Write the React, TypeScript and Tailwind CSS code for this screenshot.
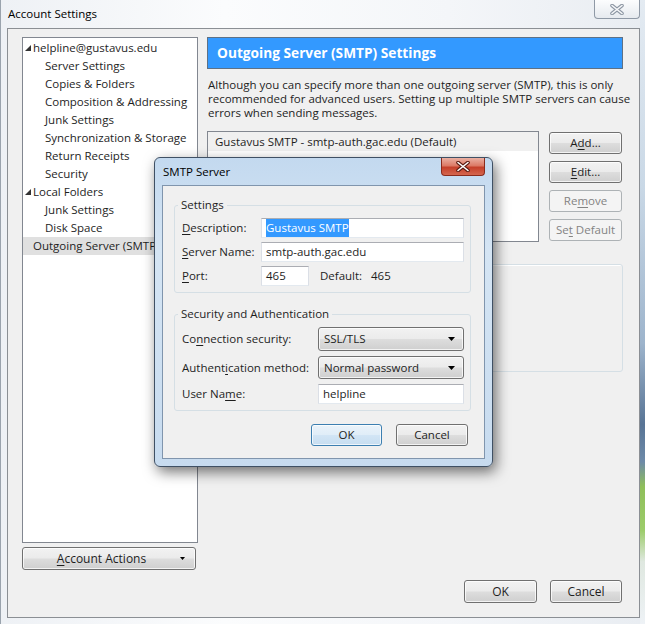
import React from "react";

// Windows 7 style classes
const btn =
  "flex items-center justify-center rounded-[3px] border border-[#707070] bg-[linear-gradient(to_bottom,#f2f2f2_0%,#ebebeb_48%,#dddddd_52%,#cfcfcf_100%)] shadow-[inset_0_0_0_1px_rgba(255,255,255,0.75)] text-[#1e1e1e]";
const btnOff =
  "flex items-center justify-center rounded-[3px] border border-[#adb2b5] bg-[#f4f4f4] text-[#838383]";
const textbox =
  "flex items-center border border-[#abadb3] border-l-[#dbdfe6] border-r-[#dbdfe6] border-b-[#e3e9ef] bg-white pl-[4px]";

const U = ({ children }: { children: React.ReactNode }) => (
  <span className="underline underline-offset-[2px]">{children}</span>
);

const GlassX = ({ outer, inner }: { outer: string; inner: string }) => (
  <svg width="14" height="11" viewBox="0 0 14 11">
    <path d="M2 1.5 L12 9.5 M12 1.5 L2 9.5" stroke={outer} strokeWidth="3.6" strokeLinecap="round" />
    <path d="M2 1.5 L12 9.5 M12 1.5 L2 9.5" stroke={inner} strokeWidth="1.6" strokeLinecap="round" />
  </svg>
);

const Caret = () => (
  <svg width="7" height="4" viewBox="0 0 7 4">
    <polygon points="0,0 7,0 3.5,4" fill="#000" />
  </svg>
);

type Node = { label: React.ReactNode; level: 0 | 1; open?: boolean; selected?: boolean };

const tree: Node[] = [
  { label: "helpline@gustavus.edu", level: 0, open: true },
  { label: "Server Settings", level: 1 },
  { label: "Copies & Folders", level: 1 },
  { label: "Composition & Addressing", level: 1 },
  { label: "Junk Settings", level: 1 },
  { label: "Synchronization & Storage", level: 1 },
  { label: "Return Receipts", level: 1 },
  { label: "Security", level: 1 },
  { label: "Local Folders", level: 0, open: true },
  { label: "Junk Settings", level: 1 },
  { label: "Disk Space", level: 1 },
  { label: "Outgoing Server (SMTP)", level: 0, selected: true },
];

const TreeRow = ({ node }: { node: Node }) => (
  <div
    className={
      "flex h-[18px] items-center whitespace-nowrap " +
      (node.selected ? "bg-[#e0e0e0]" : "")
    }
  >
    {node.level === 0 ? (
      <span className="flex w-[10px] justify-end pl-[2px] pr-[2px]">
        {node.open && (
          <svg width="6" height="6" viewBox="0 0 6 6">
            <polygon points="6,0 6,6 0,6" fill="#333" />
          </svg>
        )}
      </span>
    ) : (
      <span className="w-[22px]" />
    )}
    <span>{node.label}</span>
  </div>
);

const SmtpDialog = () => (
  <div className="absolute left-[153px] top-[157px] z-10 flex h-[310px] w-[339px] flex-col rounded-[6px] border border-[#3f5064] bg-[linear-gradient(to_bottom,#c3d9ef_0%,#d5e5f4_30%,#c7dbef_100%)] shadow-[3px_5px_14px_rgba(0,0,0,0.55)]">
    <div className="relative h-[27px] shrink-0">
      <span className="absolute left-[8px] top-[6px] leading-[16px] text-black">SMTP Server</span>
      <div className="absolute right-[7px] top-0 flex h-[18px] w-[44px] items-center justify-center rounded-b-[4px] border border-t-0 border-[#8a2b1c] bg-[linear-gradient(to_bottom,#eab0a2_0%,#dc7a66_45%,#c5402a_55%,#d4664e_100%)]">
        <GlassX outer="#5a1a10" inner="#ffffff" />
      </div>
    </div>
    <div className="mx-[7px] mb-[7px] flex flex-1 flex-col border border-[#8095ad] bg-[#f0f0f0] pl-[11px] pr-[13px] pt-[11px]">
      <fieldset className="rounded-[3px] border border-[#d5dfe5] pb-[6px] pl-[7px] pr-[6px]">
        <legend className="ml-[-4px] px-[3px] leading-[16px]">Settings</legend>
        <div className="mt-[5px] flex flex-col gap-[4px]">
          <div className="flex h-[20px] items-center">
            <span className="w-[79px]"><U>D</U>escription:</span>
            <div className={textbox + " h-[20px] flex-1"}>
              <span className="bg-[#3399ff] text-white">Gustavus SMTP</span>
            </div>
          </div>
          <div className="flex h-[20px] items-center">
            <span className="w-[79px]"><U>S</U>erver Name:</span>
            <div className={textbox + " h-[20px] flex-1"}>smtp-auth.gac.edu</div>
          </div>
          <div className="flex h-[20px] items-center">
            <span className="w-[79px]"><U>P</U>ort:</span>
            <div className={textbox + " h-[20px] w-[48px]"}>465</div>
            <span className="ml-[11px] w-[51px]">Default:</span>
            <span>465</span>
          </div>
        </div>
      </fieldset>

      <fieldset className="mt-[13px] rounded-[3px] border border-[#d5dfe5] pb-[6px] pl-[7px] pr-[6px]">
        <legend className="ml-[-4px] px-[3px] leading-[16px]">Security and Authentication</legend>
        <div className="mt-[5px] flex flex-col gap-[5px]">
          <div className="flex h-[24px] items-center">
            <span className="w-[136px]">Co<U>n</U>nection security:</span>
            <div className={btn + " h-[24px] flex-1 !justify-between pl-[5px] pr-[8px]"}>
              <span>SSL/TLS</span>
              <Caret />
            </div>
          </div>
          <div className="flex h-[23px] items-center">
            <span className="w-[136px]">Authent<U>i</U>cation method:</span>
            <div className={btn + " h-[23px] flex-1 !justify-between pl-[5px] pr-[8px]"}>
              <span>Normal password</span>
              <Caret />
            </div>
          </div>
          <div className="flex h-[20px] items-center">
            <span className="w-[136px]">User Na<U>m</U>e:</span>
            <div className={textbox + " h-[20px] flex-1"}>helpline</div>
          </div>
        </div>
      </fieldset>

      <div className="mr-[3px] mt-[13px] flex justify-end gap-[14px]">
        <div className="flex h-[22px] w-[71px] items-center justify-center rounded-[3px] border border-[#3c7fb1] bg-[linear-gradient(to_bottom,#eaf3fa_0%,#e0edf8_48%,#d2e5f5_52%,#c6ddf0_100%)] shadow-[inset_0_0_0_1px_rgba(255,255,255,0.7)]">
          OK
        </div>
        <div className={btn + " h-[22px] w-[72px]"}>Cancel</div>
      </div>
    </div>
  </div>
);

export default function App() {
  return (
    <div className="flex h-[624px] w-[645px] overflow-hidden bg-[#eef2f6] font-['Open_Sans',sans-serif] text-[11.5px] text-[#1e1e1e]">
      <div className="relative flex h-[624px] w-[640px] flex-col border-l border-[#9aa3ad] bg-[linear-gradient(to_right,#eef1f5_0%,#fbfcfd_35%,#f4f6f9_70%,#e9edf2_100%)]">
        {/* title bar */}
        <div className="flex h-[28px] shrink-0 items-start justify-between">
          <span className="pl-[7px] pt-[6px] text-[11.5px] leading-[16px] text-black">Account Settings</span>
          <div className="flex h-[19px] w-[46px] items-center justify-center rounded-b-[4px] border border-t-0 border-[#8f99a6] bg-[linear-gradient(to_bottom,#fcfdfe,#e6eaef)]">
            <GlassX outer="#8c96a3" inner="#f7f8fa" />
          </div>
        </div>

        {/* client area */}
        <div className="ml-[6px] flex h-[590px] w-[633px] flex-col border border-[#8b8f94] bg-[#f0f0f0] pl-[14px] pr-[16px] pt-[8px]">
          <div className="flex gap-[9px]">
            {/* account tree */}
            <div className="flex w-[176px] flex-col">
              <div className="h-[506px] overflow-hidden border border-[#828790] bg-white pt-[1px]">
                {tree.map((n, i) => (
                  <TreeRow key={i} node={n} />
                ))}
              </div>
              <div className={btn + " mt-[4px] h-[23px] w-[174px] !justify-start pr-[10px]"}>
                <span className="flex-1 text-center text-[12px]"><U>A</U>ccount Actions</span>
                <svg width="5" height="3" viewBox="0 0 5 3">
                  <polygon points="0,0 5,0 2.5,3" fill="#000" />
                </svg>
              </div>
            </div>

            {/* settings pane */}
            <div className="flex w-[416px] flex-col">
              <div className="flex h-[32px] items-center border border-[#5e7185] bg-[#3399ff] pl-[9px] text-[13.7px] font-bold text-white">
                Outgoing Server (SMTP) Settings
              </div>
              <p className="mt-[9px] whitespace-nowrap pl-[1px] leading-[14px]">
                Although you can specify more than one outgoing server (SMTP), this is only
                <br />
                recommended for advanced users. Setting up multiple SMTP servers can cause
                <br />
                errors when sending messages.
              </p>
              <div className="mt-[11px] flex gap-[10px]">
                <div className="h-[111px] w-[332px] border border-[#828790] bg-white">
                  <div className="flex h-[19px] items-center bg-[#f0f0f0] pl-[7px]">
                    Gustavus SMTP - smtp-auth.gac.edu (Default)
                  </div>
                </div>
                <div className="mt-[1px] flex w-[73px] flex-col gap-[7px]">
                  <div className={btn + " h-[22px]"}><span>A<U>d</U>d...</span></div>
                  <div className={btn + " h-[22px]"}><span><U>E</U>dit...</span></div>
                  <div className={btnOff + " h-[22px]"}><span>Re<U>m</U>ove</span></div>
                  <div className={btnOff + " h-[22px]"}><span>Se<U>t</U> Default</span></div>
                </div>
              </div>
              <div className="mt-[22px] h-[108px] rounded-[3px] border border-[#d5dfe5] shadow-[inset_1px_1px_0_#ffffff]" />
            </div>
          </div>

          <div className="mr-[1px] mt-[10px] flex justify-end gap-[13px]">
            <div className={btn + " h-[23px] w-[73px] text-[12px]"}>OK</div>
            <div className={btn + " h-[23px] w-[72px] text-[12px]"}>Cancel</div>
          </div>
        </div>

        <SmtpDialog />
      </div>
      {/* desktop showing at the right edge */}
      <div className="h-[624px] w-[5px] bg-[linear-gradient(to_bottom,#e4ebf2_0%,#c9d8e6_30%,#9db4cc_55%,#587495_68%,#6d8aa8_74%,#8fbf5a_78%,#9ccc6a_85%,#dfe8e0_90%,#eef2f6_100%)]" />
    </div>
  );
}
